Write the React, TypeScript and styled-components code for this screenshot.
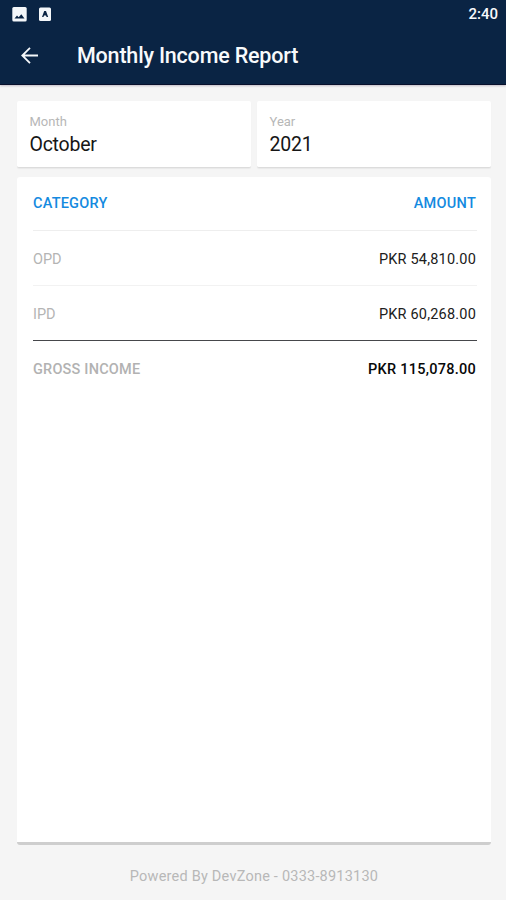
import React from "react";
import styled, { createGlobalStyle } from "styled-components";

const GlobalStyle = createGlobalStyle`
  * { box-sizing: border-box; }
  body { margin: 0; background: #f5f5f5; font-family: Roboto, sans-serif; }
`;

const Screen = styled.div`
  display: flex;
  flex-direction: column;
  width: 506px;
  height: 900px;
  background: #f5f5f5;
  overflow: hidden;
`;

const Header = styled.header`
  height: 85px;
  flex: none;
  background: #0a2444;
  color: #f8fafc;
  border-bottom: 1px solid #08102c;
  box-shadow: 0 1px 2px rgba(40, 20, 60, 0.25);
`;

const StatusBar = styled.div`
  display: flex;
  align-items: center;
  height: 28px;
  padding: 0 8px 0 12px;
  gap: 11px;
`;

const Clock = styled.span`
  margin-left: auto;
  font-size: 15px;
  font-weight: 500;
  line-height: 28px;
`;

const AppBar = styled.div`
  display: flex;
  align-items: center;
  height: 55px;
  padding-left: 20px;
  gap: 37px;
`;

const BackButton = styled.button`
  display: flex;
  padding: 0;
  border: 0;
  background: none;
`;

const Title = styled.h1`
  margin: 0;
  font-size: 21.5px;
  font-weight: 500;
  line-height: 28px;
  letter-spacing: -0.19px;
`;

const Content = styled.main`
  flex: 1;
  display: flex;
  flex-direction: column;
  padding: 16px 15px 0 17px;
`;

const Filters = styled.div`
  display: grid;
  grid-template-columns: 234px 234px;
  gap: 6px;
  height: 67px;
`;

const Field = styled.div`
  background: #fff;
  border-radius: 2px;
  border-bottom: 1px solid #dcdcdc;
  box-shadow: 0 1px 1px rgba(0, 0, 0, 0.05);
  padding: 12px 12.5px 0;
`;

const FieldLabel = styled.div`
  font-size: 13px;
  line-height: 17px;
  color: #b7b7b7;
`;

const FieldValue = styled.div`
  font-size: 19.5px;
  line-height: 30px;
  letter-spacing: -0.25px;
  color: #161616;
`;

const Report = styled.section`
  margin-top: 9px;
  height: 668px;
  padding: 0 14px 0 16px;
  background: #fff;
  border-radius: 3px;
  border-bottom: 3px solid #cecece;
`;

type Tone = "head" | "item" | "total";
const labelColor = { head: "#148ae0", item: "#b4b4b4", total: "#b2b2b2" };
const valueColor = { head: "#148ae0", item: "#202020", total: "#080808" };
const labelSpacing = { head: 0.22, item: 0, total: 0.2 };
const valueSpacing = { head: 0.28, item: 0.2, total: 0.26 };

const Row = styled.div<{ $tone: Tone; $rule?: string }>`
  display: flex;
  justify-content: space-between;
  align-items: center;
  height: ${(p) => (p.$tone === "head" ? 54 : 55)}px;
  padding-top: ${(p) => (p.$tone === "head" ? 0 : 2)}px;
  padding-right: 1px;
  border-bottom: ${(p) => (p.$rule ? `1px solid ${p.$rule}` : "0")};
  font-size: 14.5px;
  font-weight: ${(p) => (p.$tone === "item" ? 400 : 500)};
`;

const Label = styled.span<{ $tone: Tone }>`
  color: ${(p) => labelColor[p.$tone]};
  letter-spacing: ${(p) => labelSpacing[p.$tone]}px;
`;

const Amount = styled.span<{ $tone: Tone }>`
  color: ${(p) => valueColor[p.$tone]};
  letter-spacing: ${(p) => valueSpacing[p.$tone]}px;
`;

const Footer = styled.footer`
  height: 54px;
  line-height: 63px;
  text-align: center;
  font-size: 14.5px;
  letter-spacing: 0.22px;
  color: #b8b8b8;
`;

const rows: { label: string; amount: string; tone: Tone; rule?: string }[] = [
  { label: "CATEGORY", amount: "AMOUNT", tone: "head", rule: "#eeeeee" },
  { label: "OPD", amount: "PKR 54,810.00", tone: "item", rule: "#f2f2f2" },
  { label: "IPD", amount: "PKR 60,268.00", tone: "item", rule: "#46474b" },
  { label: "GROSS INCOME", amount: "PKR 115,078.00", tone: "total" },
];

export default function App() {
  return (
    <>
      <GlobalStyle />
      <Screen>
        <Header>
          <StatusBar>
            <svg width="15" height="15" viewBox="0 0 15 15">
              <rect x="0.3" y="0" width="14.4" height="14.5" rx="1.5" fill="#f4f7fa" />
              <path d="M2.5 11.5 L5 8.5 L6.7 10.3 L9.3 7.3 L12.5 11.5 Z" fill="#0a2444" />
            </svg>
            <svg width="14" height="15" viewBox="0 0 14 15">
              <rect x="1" y="0.5" width="12" height="13.5" rx="1.5" fill="#f4f7fa" />
              <path d="M4 10 L6.2 4 H8 L10.2 10 H8.6 L8 8.6 H6 L5.5 10 Z" fill="#0a2444" />
            </svg>
            <Clock>2:40</Clock>
          </StatusBar>
          <AppBar>
            <BackButton aria-label="Back">
              <svg width="20" height="20" viewBox="0 0 20 20" fill="none" stroke="#f4f7fa" strokeWidth="1.8">
                <path d="M18 9.5 H2.5 M10 1.8 L2.3 9.5 L10 17.2" />
              </svg>
            </BackButton>
            <Title>Monthly Income Report</Title>
          </AppBar>
        </Header>
        <Content>
          <Filters>
            <Field>
              <FieldLabel>Month</FieldLabel>
              <FieldValue>October</FieldValue>
            </Field>
            <Field>
              <FieldLabel>Year</FieldLabel>
              <FieldValue>2021</FieldValue>
            </Field>
          </Filters>
          <Report>
            {rows.map((r) => (
              <Row key={r.label} $tone={r.tone} $rule={r.rule}>
                <Label $tone={r.tone}>{r.label}</Label>
                <Amount $tone={r.tone}>{r.amount}</Amount>
              </Row>
            ))}
          </Report>
          <Footer>Powered By DevZone - 0333-8913130</Footer>
        </Content>
      </Screen>
    </>
  );
}
